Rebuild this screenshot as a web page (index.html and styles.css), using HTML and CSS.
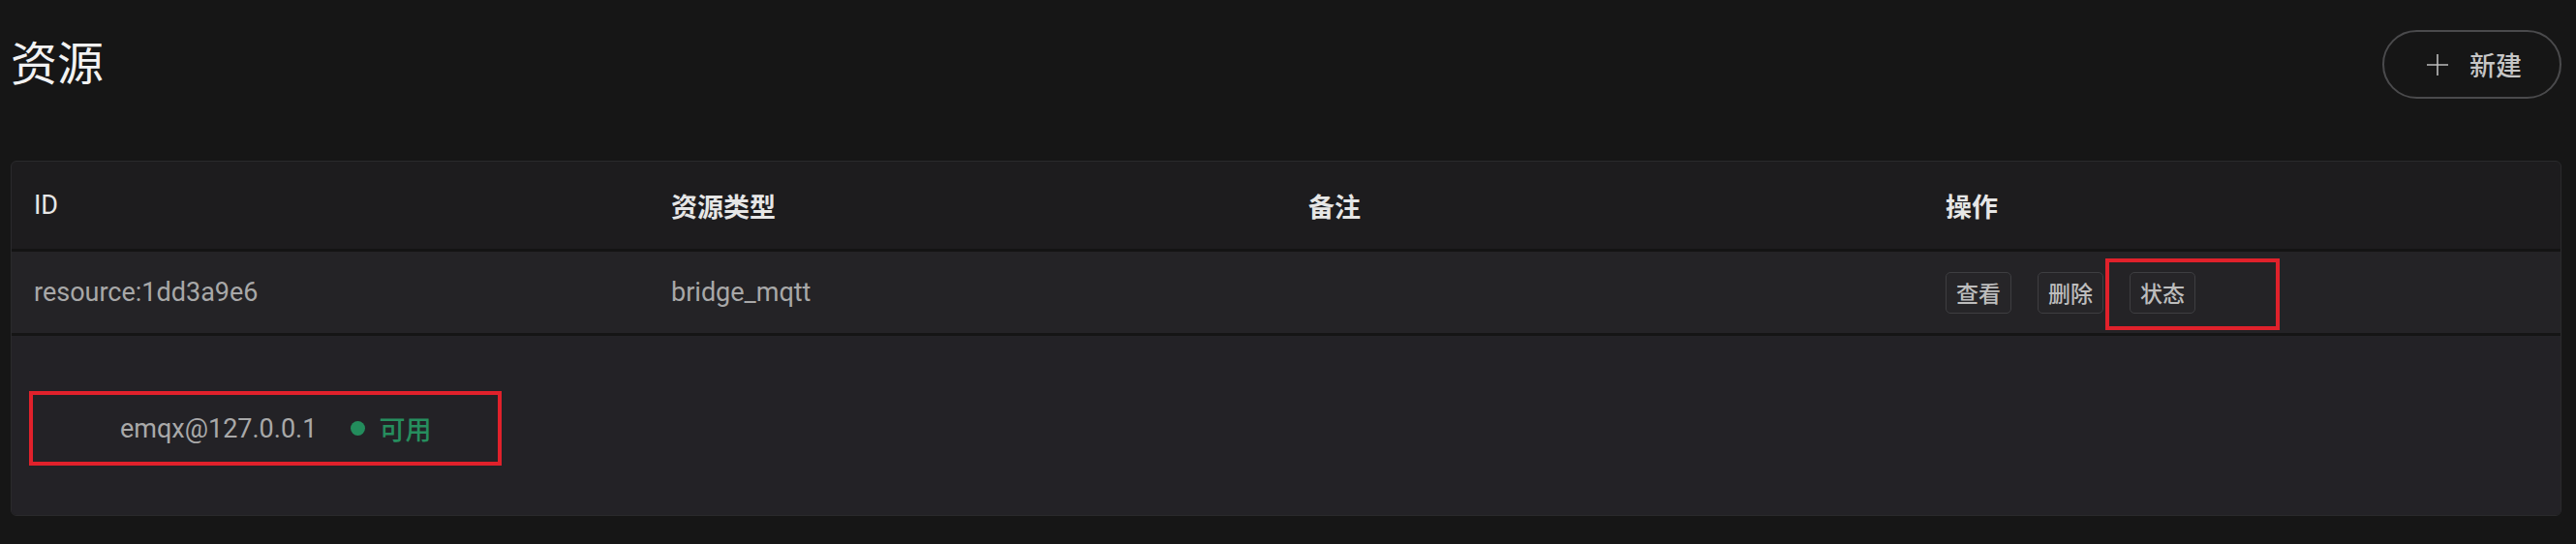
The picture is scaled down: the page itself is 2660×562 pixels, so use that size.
FILE: index.html
```html
<!DOCTYPE html>
<html lang="zh-CN">
<head>
    <meta charset="UTF-8">
    <meta name="viewport" content="width=device-width, initial-scale=1.0">
    <title>资源</title>
    <link rel="stylesheet" href="styles.css">
</head>
<body>
    <div class="page">
        <div class="page-header">
            <h1>资源</h1>
            <button class="btn-create">
                <svg class="icon-plus" viewBox="0 0 22 22" width="22" height="22">
                    <path d="M11 0 V22 M0 11 H22" stroke="currentColor" stroke-width="1.6" fill="none"/>
                </svg>
                <span>新建</span>
            </button>
        </div>

        <div class="card">
            <table class="resource-table">
                <thead>
                    <tr>
                        <th class="col-id">ID</th>
                        <th>资源类型</th>
                        <th>备注</th>
                        <th>操作</th>
                    </tr>
                </thead>
                <tbody>
                    <tr class="resource-row">
                        <td>resource:1dd3a9e6</td>
                        <td>bridge_mqtt</td>
                        <td></td>
                        <td>
                            <div class="actions">
                                <button class="btn-small">查看</button>
                                <button class="btn-small">删除</button>
                                <span class="marked">
                                    <button class="btn-small">状态</button>
                                </span>
                            </div>
                        </td>
                    </tr>
                    <tr class="expand-row">
                        <td colspan="4">
                            <div class="node-status">
                                <span class="node-name">emqx@127.0.0.1</span>
                                <span class="status-dot"></span>
                                <span class="status-text">可用</span>
                            </div>
                        </td>
                    </tr>
                </tbody>
            </table>
        </div>
    </div>
</body>
</html>
```

FILE: styles.css
```css
body {
    margin: 0;
    background: #161616;
    font-family: Roboto, "Noto Sans CJK SC", sans-serif;
    color: #a9a9a9;
}
.page {
    padding: 31px 15px 0 11px;
}
.page-header {
    display: flex;
    justify-content: space-between;
    align-items: center;
    height: 71px;
}
h1 {
    margin: 0;
    font-size: 48px;
    font-weight: 400;
    line-height: 1;
    color: #f2f2f2;
}
.btn-create {
    display: flex;
    align-items: center;
    gap: 22px;
    box-sizing: border-box;
    width: 185px;
    height: 71px;
    padding: 0 0 0 44px;
    background: transparent;
    border: 2px solid #4a4a4c;
    border-radius: 36px;
    color: #c6c6c6;
    font-family: inherit;
    font-size: 27px;
    font-weight: 500;
}
.icon-plus {
    color: #bcbcbc;
}
.card {
    margin-top: 64px;
    border: 1px solid #2a2a2c;
    border-radius: 6px;
    overflow: hidden;
    background: #1d1c1e;
}
.resource-table {
    width: 100%;
    table-layout: fixed;
    border-collapse: separate;
    border-spacing: 0;
}
.resource-table th {
    height: 90px;
    padding: 0 0 0 23px;
    text-align: left;
    font-size: 27px;
    font-weight: 700;
    color: #e6e6e6;
    border-bottom: 3px solid #141414;
}
.resource-table th.col-id {
    font-weight: 400;
}
.resource-row td {
    height: 84px;
    padding: 0 0 0 23px;
    background: #242326;
    font-size: 27px;
    color: #a8a8a8;
    border-bottom: 3px solid #151515;
}
.actions {
    display: flex;
    align-items: center;
    gap: 27px;
}
.btn-small {
    box-sizing: border-box;
    height: 43px;
    padding: 0 10px;
    background: #262528;
    border: 1px solid #3e3e41;
    border-radius: 5px;
    color: #bdbdbd;
    font-family: inherit;
    font-size: 23px;
    font-weight: 500;
}
.marked {
    position: relative;
    display: inline-flex;
}
.marked::after {
    content: "";
    position: absolute;
    top: -14px;
    left: -25px;
    right: -87px;
    bottom: -17px;
    border: 4px solid #e0212b;
}
.expand-row td {
    padding: 57px 0 51px 18px;
    background: #232226;
}
.node-status {
    display: flex;
    align-items: center;
    box-sizing: border-box;
    width: 488px;
    height: 77px;
    padding-left: 90px;
    border: 4px solid #e0212b;
    font-size: 27px;
}
.node-name {
    color: #a9a9a9;
}
.status-dot {
    width: 15px;
    height: 15px;
    margin: 0 14px 0 35px;
    border-radius: 50%;
    background: #238c5c;
}
.status-text {
    color: #268e5e;
    font-weight: 500;
}
```
